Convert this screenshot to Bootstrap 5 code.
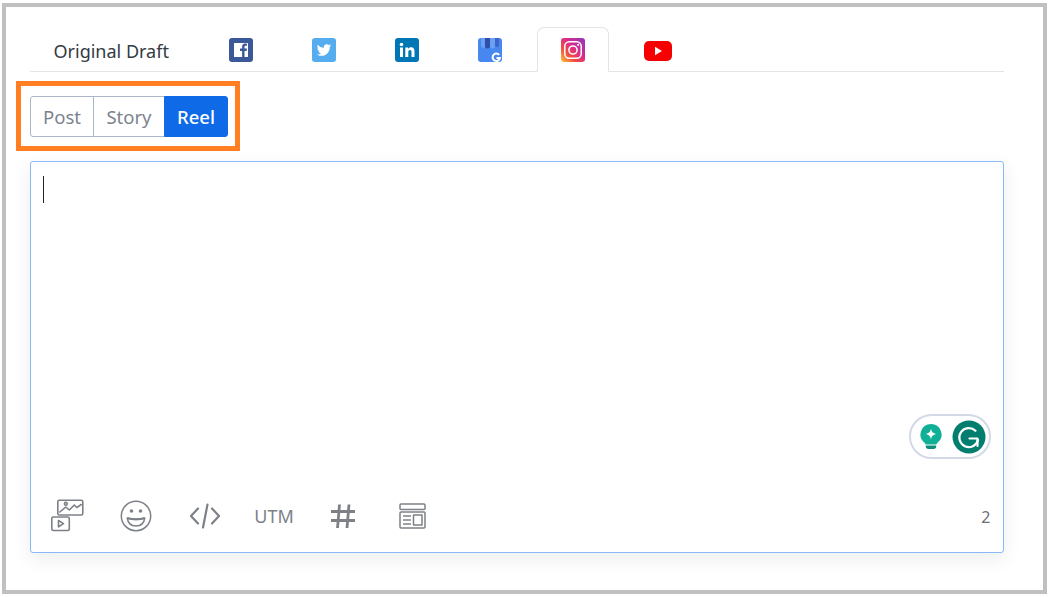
<!DOCTYPE html>
<html lang="en">
<head>
<meta charset="utf-8">
<title>Post composer</title>
<link rel="stylesheet" href="https://cdn.jsdelivr.net/npm/bootstrap@5.3.0/dist/css/bootstrap.min.css">
<style>
html,body{height:597px;overflow:hidden;background:#fff}
body{font-family:"Noto Sans",sans-serif;padding:3px 3px 3px 2px}
.shot-frame{width:1045px;height:591px;border:4.5px solid #c0c0c0;padding:20px 39px 0 23.5px}
.tab-strip{border-bottom:1px solid #e2e4e8;gap:11px;height:45px;flex-wrap:nowrap}
.tab-strip .nav-link{height:45px;width:72px;padding:0;margin:0;display:flex;align-items:center;justify-content:center;border-radius:7px 7px 0 0;color:#333b44}
.tab-strip .nav-item:first-child .nav-link{width:175px;justify-content:flex-start;padding-left:23px;font-size:18px;padding-top:4px}
.tab-strip .nav-item:first-child{margin-right:-11px}
.tab-strip .nav-item:last-child .nav-link{width:76px}
.tab-strip .nav-link.active{border-color:#e2e4e8 #e2e4e8 #fff}
.tab-glyph{display:block;width:24px;height:24px}
.tab-glyph-wide{width:28px}
.callout{display:inline-block;border:5px solid #ff7f22;margin:9px 0 0 -14px;padding:10px 7px 9px 9px;height:70px;vertical-align:top}
.format-btn{height:41px;padding:0 12.5px;font-size:18.5px;line-height:39px;color:#7b838e;border-color:#a9b7c9;background:#fff;border-radius:3px}
.format-btn:hover{color:#7b838e;border-color:#a9b7c9;background:#fff}
.format-btn:nth-child(2){padding:0 12px}
.format-btn.active{background:#0f6ae8!important;border-color:#0f6ae8!important;color:#fff!important;font-weight:500}
.composer{position:relative;height:392px;margin-top:10px;width:974px;border:1px solid #8ab9f7;border-radius:3px;box-shadow:0 6px 18px rgba(40,50,70,.09);background:#fff}
.caret-mark{width:1px;height:27px;background:#222;margin:14px 0 0 12px}
.pill{position:absolute;right:12px;top:252px;width:82px;height:45px;border:2px solid #d3d9e6;border-radius:23px;background:#fff;display:flex;align-items:center;justify-content:space-between;padding:0 3px 0 9px}
.tools{position:absolute;left:2px;right:0;bottom:18px;height:36px}
.tool{width:69px;height:36px;display:flex;align-items:center;justify-content:center;color:#7d8187}
.tool-text{font-size:18px}
.count{position:absolute;right:12px;bottom:26px;font-size:16px;line-height:18px;color:#6c7077}
</style>
</head>
<body>
<div class="shot-frame">
  <ul class="nav nav-tabs tab-strip">
    <li class="nav-item"><a class="nav-link" href="#">Original Draft</a></li>
    <li class="nav-item"><a class="nav-link" href="#" aria-label="Facebook">
      <svg class="tab-glyph" viewBox="0 0 24 24"><rect width="24" height="24" rx="3" fill="#3b5998"/><path fill="#fff" d="M5.500 5h13a.5.5 0 0 1 .5.5v13a.5.5 0 0 1-.5.5h-3v-6h2.200l.3-2.400h-2.500V9c0-.8.3-1.200 1.200-1.200H18V5.700c-.4 0-1-.1-1.800-.1-1.900 0-3.100 1.100-3.100 3.200v1.800H11V13h2.100v6H5.500a.5.5 0 0 1-.5-.5v-13a.5.5 0 0 1 .5-.5z"/></svg></a></li>
    <li class="nav-item"><a class="nav-link" href="#" aria-label="Twitter">
      <svg class="tab-glyph" viewBox="0 0 24 24"><rect width="24" height="24" rx="3" fill="#55acee"/><path fill="#fff" transform="translate(4.800 4.800) scale(.6)" d="M23.954 4.569c-.885.389-1.830.654-2.825.775 1.014-.611 1.794-1.574 2.163-2.723-.951.555-2.005.959-3.127 1.184-.896-.959-2.173-1.559-3.591-1.559-2.717 0-4.920 2.203-4.920 4.917 0 .39.045.765.127 1.124C7.691 8.094 4.066 6.130 1.640 3.161c-.427.722-.666 1.561-.666 2.475 0 1.710.870 3.213 2.188 4.096-.807-.026-1.566-.248-2.228-.616v.061c0 2.385 1.693 4.374 3.946 4.827-.413.111-.849.171-1.296.171-.314 0-.615-.03-.916-.086.631 1.953 2.445 3.377 4.604 3.417-1.680 1.319-3.809 2.105-6.102 2.105-.39 0-.779-.023-1.170-.067 2.189 1.394 4.768 2.209 7.557 2.209 9.054 0 13.999-7.496 13.999-13.986 0-.209 0-.42-.015-.63.961-.689 1.800-1.560 2.460-2.548l-.047-.02z"/></svg></a></li>
    <li class="nav-item"><a class="nav-link" href="#" aria-label="LinkedIn">
      <svg class="tab-glyph" viewBox="0 0 24 24"><rect width="24" height="24" rx="3" fill="#0077b5"/><g fill="#fff"><rect x="5" y="9.500" width="3" height="9.500"/><circle cx="6.500" cy="6.500" r="1.800"/><path d="M10.300 9.500h2.900v1.300c.5-.9 1.600-1.500 2.900-1.500 2.700 0 3.400 1.700 3.400 4.200V19h-3v-4.900c0-1.200-.2-2.200-1.500-2.200s-1.700 1-1.700 2.200V19h-3z"/></g></svg></a></li>
    <li class="nav-item"><a class="nav-link" href="#" aria-label="Google My Business">
      <svg class="tab-glyph" viewBox="0 0 24 24"><path fill="#4688f0" d="M3 0h18a3 3 0 0 1 3 3v18a3 3 0 0 1-3 3H3a3 3 0 0 1-3-3V3a3 3 0 0 1 3-3z"/><path fill="#6a9ff2" d="M3 0h4.700v8a2.400 2.400 0 0 1-4.700 0zM12 0h5v8a2.500 2.500 0 0 1-5 0z"/><path fill="#2f4ea8" d="M7 0h5v8a2.500 2.500 0 0 1-5 0z"/><path fill="#3f64c8" d="M17 0h4v8a2.300 2.300 0 0 1-4 0z"/><path fill="none" stroke="#fff" stroke-width="2" d="M21.200 16.900a3.700 3.700 0 1 0 .8 3h-3.500"/></svg></a></li>
    <li class="nav-item"><a class="nav-link active" href="#" aria-label="Instagram">
      <svg class="tab-glyph" viewBox="0 0 24 24"><defs><linearGradient id="insta" x1="0" y1="1" x2="1" y2="0"><stop offset="0" stop-color="#fdc83a"/><stop offset=".3" stop-color="#f2503f"/><stop offset=".6" stop-color="#d62b8e"/><stop offset="1" stop-color="#8f39ba"/></linearGradient></defs><rect width="24" height="24" rx="3" fill="url(#insta)"/><rect x="3.800" y="3.800" width="16.400" height="16.400" rx="4.500" fill="none" stroke="#fff" stroke-width="1.500"/><circle cx="12" cy="12" r="4.100" fill="none" stroke="#fff" stroke-width="1.500"/><circle cx="17.200" cy="6.800" r="1.100" fill="#fff"/></svg></a></li>
    <li class="nav-item"><a class="nav-link" href="#" aria-label="YouTube">
      <svg class="tab-glyph tab-glyph-wide" viewBox="0 0 28 24"><rect x="0" y="3" width="28" height="20" rx="5" fill="#f60002"/><path fill="#fff" d="M11 8.800l7 4.200-7 4.200z"/></svg></a></li>
  </ul>

  <div class="callout">
    <div class="btn-group" role="group" aria-label="Post type">
      <button type="button" class="btn format-btn">Post</button>
      <button type="button" class="btn format-btn">Story</button>
      <button type="button" class="btn format-btn active">Reel</button>
    </div>
  </div>

  <div class="composer">
    <div class="caret-mark"></div>
    <div class="pill">
      <svg width="22" height="25" viewBox="0 0 22 25"><path fill="#0fb096" d="M11 0a10.500 10.500 0 0 1 6.800 18.500c-.8.700-1.200 1.200-1.400 2H5.600c-.2-.8-.6-1.300-1.400-2A10.500 10.500 0 0 1 11 0z"/><path fill="#fff" d="M11 4.500c.6 3.400 1.800 4.600 5.500 5.500-3.700.9-4.900 2.100-5.500 5.500-.6-3.400-1.800-4.600-5.500-5.500 3.700-.9 4.900-2.100 5.500-5.500z"/><path fill="#0c8d7c" d="M5.800 21.500h10.400v1c0 1.400-1 2.500-2.500 2.500H8.300c-1.500 0-2.500-1.100-2.500-2.500z"/></svg>
      <svg width="34" height="34" viewBox="0 0 34 34"><circle cx="17" cy="17" r="16.500" fill="#027e6f"/><path fill="none" stroke="#fff" stroke-width="2.200" stroke-linecap="round" d="M23.500 10.800A9.500 9.500 0 1 0 26 20"/><path fill="none" stroke="#fff" stroke-width="2.200" stroke-linecap="round" stroke-linejoin="round" d="M17.500 18.500h8v7.500"/></svg>
    </div>
    <div class="tools d-flex">
      <div class="tool"><svg width="34" height="34" viewBox="0 0 34 34" fill="none" stroke="currentColor" stroke-width="1.600" stroke-linejoin="round" stroke-linecap="round"><rect x="7.800" y="1.200" width="25" height="14.800" rx="1.500"/><path d="M9.800 13l6-5 3.500 3 5-5 2.500 2.500 4.500-3"/><circle cx="15.800" cy="4.800" r="1.400"/><rect x="1.800" y="18" width="17.500" height="13.500" rx="1.500"/><path d="M8.500 21.500l5 3.200-5 3.200z"/></svg></div>
      <div class="tool"><svg width="32" height="32" viewBox="0 0 32 32" fill="none" stroke="currentColor" stroke-width="1.500"><circle cx="16" cy="16" r="14.700"/><circle cx="11.500" cy="11" r="1.800" fill="currentColor" stroke="none"/><circle cx="20.500" cy="11" r="1.800" fill="currentColor" stroke="none"/><path stroke-linejoin="round" d="M7.300 18.200c5.600 1.400 11.800 1.400 17.400 0-.6 5-4 7.800-8.700 7.800s-8.100-2.800-8.700-7.800z"/><path stroke-width="2.200" stroke-linecap="round" d="M7.800 18.300c5.400 1.300 11 1.300 16.400 0"/></svg></div>
      <div class="tool"><svg width="32" height="26" viewBox="0 0 32 26" fill="none" stroke="currentColor" stroke-width="2.200" stroke-linecap="round" stroke-linejoin="round"><path d="M9 5.500L2 13l7 7.500M23 5.500L30 13l-7 7.500M18.500 1.500L14 24.500"/></svg></div>
      <div class="tool tool-text">UTM</div>
      <div class="tool"><svg width="26" height="26" viewBox="0 0 26 26" fill="none" stroke="currentColor" stroke-width="2.800"><path d="M9.500 1.500l-2 23.500M19 1.500L17 25M1 8.500h24M1 17.500h24"/></svg></div>
      <div class="tool"><svg width="27" height="26" viewBox="0 0 27 26" fill="none" stroke="currentColor" stroke-width="1.500" stroke-linejoin="round"><rect x="1" y="1" width="25" height="5.500" rx="1"/><rect x="1" y="9" width="25" height="16" rx="1"/><rect x="14.500" y="12" width="8.500" height="10"/><path d="M4 13h8M4 17h8M4 21h8"/></svg></div>
    </div>
    <div class="count">2</div>
  </div>
</div>
</body>
</html>
